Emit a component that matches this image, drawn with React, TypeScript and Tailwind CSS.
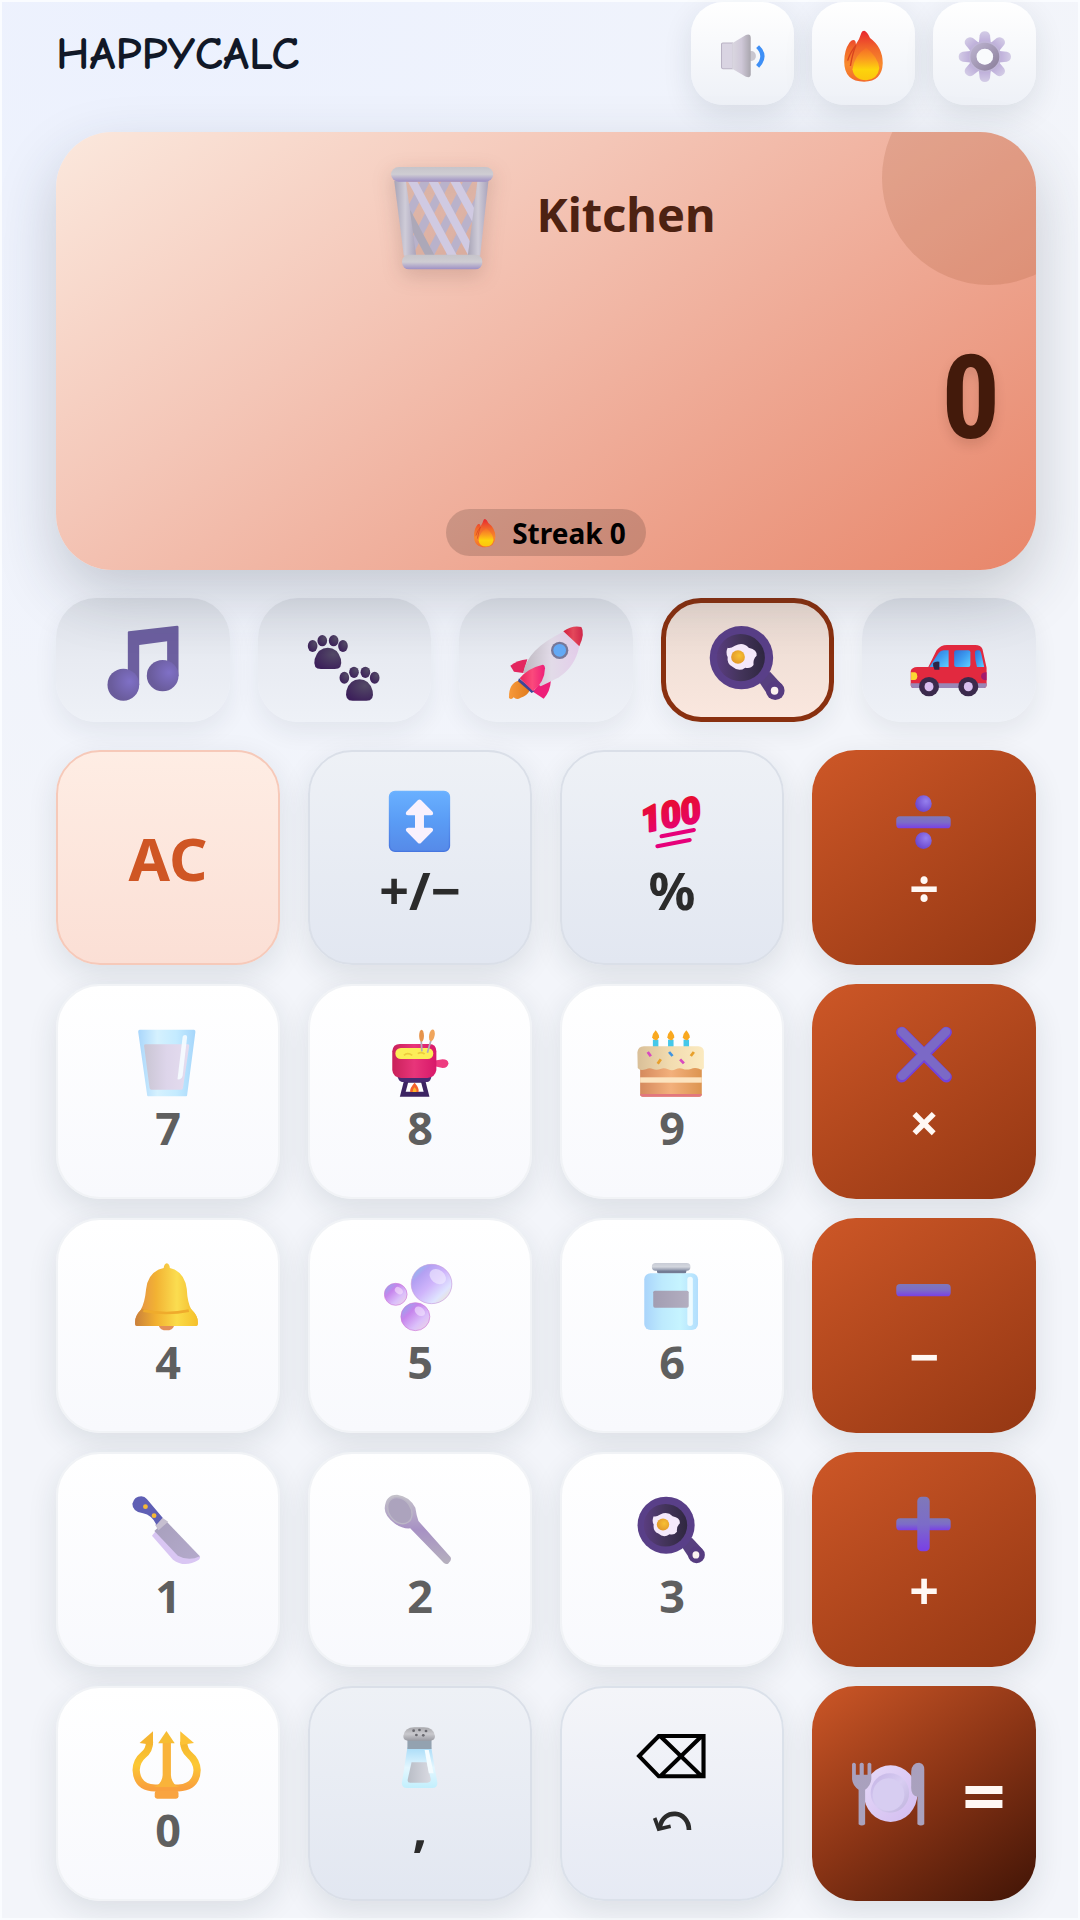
import type { ReactNode } from "react";

function Art({ box, size, children }: { box: string; size: string; children: ReactNode }) {
  return (
    <svg viewBox={box} preserveAspectRatio="none" className={`${size} shrink-0`} aria-hidden="true">
      {children}
    </svg>
  );
}

function Gradient({ id, dir = "v", stops }: { id: string; dir?: "v" | "h" | "d"; stops: string[] }) {
  return (
    <linearGradient id={id} x1="0" y1="0" x2={dir === "v" ? "0" : "1"} y2={dir === "h" ? "0" : "1"}>
      {stops.map((c, i) => (
        <stop key={i} offset={i / (stops.length - 1)} stopColor={c} />
      ))}
    </linearGradient>
  );
}

/* Shared paints for all icons */
function Paints() {
  return (
    <svg width="0" height="0" className="absolute" aria-hidden="true">
      <defs>
        <Gradient id="steel" stops={["#c6c4ca", "#cfcdd3", "#9d8fc4"]} />
        <Gradient id="steelH" dir="h" stops={["#a8a4b6", "#cfccd8", "#a9a3bb"]} />
        <Gradient id="cone" dir="h" stops={["#dad7e0", "#cfc8d8", "#a9a6ae"]} />
        <Gradient id="fireOut" stops={["#e8262f", "#f0652a", "#f98a2c", "#f26a2c"]} />
        <Gradient id="fireIn" stops={["#f56a26", "#fb9a20", "#fdd40c", "#fcc50e"]} />
        <Gradient id="gear" stops={["#d3cce6", "#b7a5d6"]} />
        <Gradient id="gearRing" dir="d" stops={["#b9b0cc", "#8f839f"]} />
        <radialGradient id="note" cx="0.7" cy="0.4" r="0.6">
          <stop offset="0" stopColor="#7f70c6" />
          <stop offset="1" stopColor="#6a5c9c" />
        </radialGradient>
        <radialGradient id="paw" cx="0.7" cy="0.3" r="0.8">
          <stop offset="0" stopColor="#534a66" />
          <stop offset="1" stopColor="#3c1f5a" />
        </radialGradient>
        <Gradient id="hull" dir="h" stops={["#bdb8c0", "#e2dbe8", "#e3cdea"]} />
        <Gradient id="nose" dir="h" stops={["#d81d3f", "#e84a5c", "#d3264a"]} />
        <Gradient id="fin" dir="h" stops={["#e8255c", "#fb4a7c", "#ee1f78"]} />
        <Gradient id="flame" dir="h" stops={["#f7993a", "#e07b1c"]} />
        <Gradient id="panIn" dir="h" stops={["#5a3d80", "#43345a", "#2f2740"]} />
        <radialGradient id="yolk" cx="0.6" cy="0.4" r="0.6">
          <stop offset="0" stopColor="#f7c033" />
          <stop offset="1" stopColor="#e39a2a" />
        </radialGradient>
        <Gradient id="glass" dir="d" stops={["#2f6fd8", "#3d9cf0", "#5fd0ff"]} />
        <Gradient id="blueKey" stops={["#69b0ff", "#5a9cf5", "#568ae8"]} />
        <Gradient id="blueEdge" stops={["#6db3ff", "#4676e0"]} />
        <Gradient id="hundred" stops={["#e80f22", "#e6007e"]} />
        <Gradient id="violet" stops={["#7f78b8", "#7c6cc8", "#7a3fe6"]} />
        <radialGradient id="violetDot" cx="0.65" cy="0.35" r="0.7">
          <stop offset="0" stopColor="#9580ee" />
          <stop offset="1" stopColor="#6a45cc" />
        </radialGradient>
        <Gradient id="cup" dir="h" stops={["#a9d6fb", "#d5f1fe", "#c4ebff", "#a6d6fb"]} />
        <Gradient id="milk" dir="h" stops={["#c9c5d3", "#ddd5ea", "#e5dcef"]} />
        <Gradient id="pot" dir="h" stops={["#c9215a", "#e8357a", "#d8186a"]} />
        <Gradient id="frost" dir="h" stops={["#d9bf98", "#f2dcb0", "#fbeac0"]} />
        <Gradient id="sponge" dir="h" stops={["#d58a5e", "#f3b07c", "#dc9450"]} />
        <Gradient id="bell" dir="h" stops={["#e28c4a", "#f2b233", "#fbdd50", "#f2b82a"]} />
        <Gradient id="bellRim" dir="h" stops={["#c9803c", "#f2b030", "#fbdc48", "#f5c02c"]} />
        <Gradient id="bubble" dir="d" stops={["#72d2ec", "#b3a0f2", "#cfb4fb", "#dfe4ff", "#f3e0b4"]} />
        <Gradient id="bubbleP" dir="d" stops={["#7cb8ea", "#c684ec", "#dbc0fa", "#f0d8e0"]} />
        <Gradient id="lid" stops={["#c8ccd6", "#d3d6de", "#8890a6"]} />
        <Gradient id="jar" dir="h" stops={["#a9d4fb", "#bdeafd", "#c6f4ff", "#b3defd"]} />
        <Gradient id="label" dir="h" stops={["#a29db2", "#b3aec0"]} />
        <Gradient id="knife" dir="d" stops={["#a79fbc", "#b4aacb"]} />
        <Gradient id="spoon" stops={["#c5c3ca", "#a791c4", "#b5b0bd"]} />
        <Gradient id="gold" stops={["#f4b52e", "#fcc834", "#f9a03e"]} />
        <Gradient id="shakerCap" stops={["#a8a8ac", "#c9c9ce", "#9a9ba2"]} />
        <Gradient id="shaker" stops={["#a9dcf8", "#e4f7ff", "#c2effd"]} />
        <Gradient id="salt" dir="h" stops={["#b9bdc6", "#d9dae2"]} />
        <Gradient id="plate" dir="d" stops={["#e6daf8", "#d2bcf0"]} />
        <Gradient id="plateIn" dir="d" stops={["#c3b2e4", "#d8cdf2", "#bfb3dc"]} />
        <Gradient id="cutlery" stops={["#a9a0be", "#aaa2bd"]} />
      </defs>
    </svg>
  );
}

const KEY = "size-[72px]";
const TAB = "size-20";
const TOP = "size-[54px]";

const Speaker = () => (
  <Art box="510 87 157 162" size={TOP}>
    <ellipse cx="613" cy="168" rx="13" ry="15" fill="#c8c6cf" />
    <path d="M526 133q0-4 4-4h28v77h-28q-4 0-4-4z" fill="#d9d4e2" stroke="#b9b2c4" strokeWidth="3" />
    <path d="M557 130l40-25q14-5 14 9v109q0 12-14 7l-40-24z" fill="url(#cone)" />
    <path d="M631 140Q659 168 631 199" fill="none" stroke="#3e8ff6" strokeWidth="12" />
  </Art>
);

const Fire = ({ size }: { size: string }) => (
  <Art box="859 87 157 162" size={size}>
    <path
      d="M938 92Q947 94 955 114Q992 142 992 190Q990 245 938 245Q880 244 880 185Q880 150 895 128Q902 117 910 121Q914 124 914 133Q925 116 930 98Q932 92 938 92Z"
      fill="url(#fireOut)"
    />
    <path d="M890 182Q898 155 914 136Q904 160 898 198" fill="none" stroke="#d9441f" strokeWidth="4" />
    <path d="M944 143Q978 170 982 204Q978 238 944 241Q908 240 904 208Q910 165 944 143Z" fill="url(#fireIn)" />
  </Art>
);

const Gear = () => (
  <Art box="1211 87 157 162" size={TOP}>
    {[0, 45, 90, 135, 180, 225, 270, 315].map((a) => (
      <path key={a} d="M1271 136L1274 106Q1277 94 1289 94Q1301 94 1304 106L1307 136Z" fill="url(#gear)" transform={`rotate(${a} 1289 170)`} />
    ))}
    <circle cx="1289" cy="170" r="47" fill="#c0b5d8" />
    <circle cx="1289" cy="170" r="33" fill="none" stroke="url(#gearRing)" strokeWidth="18" />
    <circle cx="1289" cy="170" r="24" fill="#f9fbfd" />
  </Art>
);

const Basket = () => (
  <Art box="1130 495 314 324" size="size-[108px]">
    <clipPath id="basketClip">
      <path d="M1178 548H1394L1368 770H1206Z" />
    </clipPath>
    <g clipPath="url(#basketClip)" fill="none" strokeWidth="24">
      <g stroke="#b9b2cb">
        <path d="M1245 535L1180 665" />
        <path d="M1305 535L1185 775" />
        <path d="M1368 535L1245 780" />
        <path d="M1400 590L1305 780" />
      </g>
      <g stroke="#d0cae2">
        <path d="M1195 535L1325 785" />
        <path d="M1255 535L1385 785" />
        <path d="M1318 535L1400 690" />
        <path d="M1185 640L1260 785" stroke="#aca8b8" />
      </g>
    </g>
    <path d="M1148 545H1182L1212 770H1176Z" fill="url(#steelH)" />
    <path d="M1390 545H1422L1398 770H1362Z" fill="url(#steelH)" />
    <rect x="1139" y="504" width="297" height="44" rx="22" fill="url(#steel)" />
    <rect x="1171" y="767" width="233" height="44" rx="20" fill="url(#steel)" />
  </Art>
);

const Music = () => (
  <Art box="296 102 232 240" size={TAB}>
    <path d="M368 130q0-3 3-3L511 110q4 0 4 4V262H482V157L401 168V288H368Z" fill="#6c5f9f" />
    <ellipse cx="355" cy="287" rx="46" ry="48" fill="url(#note)" />
    <ellipse cx="469" cy="260" rx="46" ry="47" fill="url(#note)" />
  </Art>
);

const Paws = () => (
  <Art box="881 102 232 240" size={TAB}>
    {["translate(0 0)", "translate(92 95)"].map((t) => (
      <g key={t} transform={t} fill="url(#paw)">
        <path d="M950 176Q978 176 988 210Q994 240 970 240H930Q906 240 912 210Q922 176 950 176Z" />
        <ellipse cx="906" cy="171" rx="14" ry="18" />
        <ellipse cx="934" cy="155" rx="14" ry="17" />
        <ellipse cx="967" cy="155" rx="14" ry="17" />
        <ellipse cx="994" cy="171" rx="14" ry="18" />
      </g>
    ))}
  </Art>
);

const Rocket = () => (
  <Art box="496 432 240 240" size={TAB}>
    <path d="M538 603Q503 612 505 657Q512 664 519 655Q528 665 540 656Q560 650 568 632Z" fill="url(#flame)" />
    <path d="M560 541Q530 544 509 560L520 578L548 582Z" fill="#e3265f" />
    <path d="M631 604Q628 640 609 659L577 638L600 610Z" fill="#ee1f78" />
    <path d="M668 458L716 502Q704 562 655 595Q630 608 600 622L548 580Q560 510 668 458Z" fill="url(#hull)" />
    <path d="M668 457Q694 438 722 444Q734 462 716 502Z" fill="url(#nose)" />
    <path d="M535 598L582 636L573 642L532 607Z" fill="#3c4796" />
    <path d="M606 557Q560 568 537 598L577 637Q612 610 613 568Q612 557 606 557Z" fill="url(#fin)" />
    <circle cx="657" cy="514" r="26" fill="#77799a" />
    <circle cx="657" cy="514" r="19" fill="#64aaf6" />
  </Art>
);

const Pan = ({ size }: { size: string }) => (
  <Art box="488 102 232 240" size={size}>
    <path d="M632 272L668 248L700 284L664 322Z" fill="#57407f" />
    <ellipse cx="683" cy="305" rx="27" ry="28" fill="#563c80" />
    <ellipse cx="681" cy="305" rx="11" ry="12" fill="#fbf3f0" />
    <ellipse cx="585" cy="206" rx="92" ry="95" fill="#593f88" />
    <ellipse cx="583" cy="206" rx="70" ry="71" fill="url(#panIn)" />
    <path d="M545 176Q552 180 566 170Q590 158 606 176Q632 182 629 200Q618 210 620 228Q612 240 596 236Q578 250 560 234Q542 226 545 204Q538 190 545 176Z" fill="#f5e9fb" />
    <ellipse cx="575" cy="204" rx="20" ry="20" fill="url(#yolk)" />
  </Art>
);

const Car = () => (
  <Art box="1072 102 232 240" size={TAB}>
    <path d="M1152 184Q1164 168 1182 168H1264Q1280 168 1285 180L1297 236V288Q1297 297 1288 297H1086Q1077 297 1077 288V246Q1080 235 1096 234H1128Z" fill="#e2293f" />
    <path d="M1077 283H1297V288Q1297 297 1288 297H1086Q1077 297 1077 288Z" fill="#9a86b6" />
    <path d="M1131 234L1158 192Q1164 184 1172 184H1187V234Z" fill="url(#glass)" />
    <rect x="1203" y="184" width="47" height="50" rx="6" fill="url(#glass)" />
    <path d="M1268 184H1276Q1280 186 1282 196L1290 234H1269Q1263 210 1263 192Q1263 185 1268 184Z" fill="url(#glass)" />
    <path d="M1142 222Q1148 216 1160 218V242H1146Q1140 232 1142 222Z" fill="#2d2445" />
    <path d="M1078 250H1090Q1096 252 1096 262Q1096 273 1088 273H1078Z" fill="#fbd934" />
    <path d="M1297 250Q1281 250 1281 262Q1281 274 1297 274Z" fill="#a31a6e" />
    {[1130, 1244].map((x) => (
      <g key={x}>
        <circle cx={x} cy="293" r="29" fill="#3b2a4c" />
        <ellipse cx={x} cy="293" rx="13" ry="14" fill="#d9bff0" />
      </g>
    ))}
  </Art>
);

const UpDown = () => (
  <Art box="1114 591 209 216" size={KEY}>
    <rect x="1130" y="607" width="174" height="180" rx="16" fill="url(#blueKey)" stroke="url(#blueEdge)" strokeWidth="4" />
    <path
      d="M1212 634q5-5 10 0l33 34q5 9-5 11h-20v37h20q10 2 5 11l-33 34q-5 5-10 0l-33-34q-5-9 5-11h20v-37h-20q-10-2-5-11z"
      fill="#f9f1fd"
    />
  </Art>
);

const Hundred = () => (
  <svg viewBox="0 0 72 72" className="size-[72px] shrink-0 overflow-visible" aria-hidden="true">
    <g transform="rotate(-11 36 36)">
      <text
        x="36"
        y="41"
        textAnchor="middle"
        fontFamily="Roboto, sans-serif"
        fontSize="36"
        fontWeight="900"
        fontStyle="italic"
        fill="url(#hundred)"
        stroke="url(#hundred)"
        strokeWidth="2"
        strokeLinejoin="round"
      >
        100
      </text>
      <path d="M23 48H56M17 57H50" stroke="#e6007a" strokeWidth="4" strokeLinecap="round" />
    </g>
  </svg>
);

const Divide = () => (
  <Art box="1011 591 209 216" size={KEY}>
    <rect x="1035" y="682" width="158" height="36" rx="11" fill="url(#violet)" />
    <ellipse cx="1114" cy="644" rx="24" ry="25" fill="url(#violetDot)" />
    <ellipse cx="1114" cy="755" rx="24" ry="25" fill="url(#violetDot)" />
  </Art>
);

const Times = () => (
  <Art box="1011 123 209 216" size={KEY}>
    <g strokeLinecap="round">
      <path d="M1051 160L1180 294M1180 160L1051 294" stroke="#7243dc" strokeWidth="33" />
      <path d="M1052 158L1180 290M1179 158L1052 290" stroke="#7b69c6" strokeWidth="26" />
    </g>
  </Art>
);

const Minus = () => (
  <Art box="1011 825 209 216" size={KEY}>
    <rect x="1035" y="915" width="158" height="37" rx="11" fill="url(#violet)" />
  </Art>
);

const Plus = () => (
  <Art box="1011 145 209 216" size={KEY}>
    <rect x="1035" y="236" width="158" height="36" rx="11" fill="url(#violet)" />
    <rect x="1096" y="171" width="36" height="164" rx="13" fill="url(#violet)" />
  </Art>
);

const Glass = () => (
  <Art box="383 136 209 216" size={KEY}>
    <path d="M405 147H563Q568 148 567 154L543 344Q543 347 540 347H430Q427 347 427 344L401 154Q400 148 405 147Z" fill="url(#cup)" />
    <path d="M418 195Q418 191 423 191H546Q550 191 549 196L531 322Q530 327 526 327H439Q435 327 434 322Z" fill="url(#milk)" />
    <path d="M530 168Q531 163 537 163Q543 163 543 169L530 285Q526 298 515 296Z" fill="#f6fcff" opacity="0.9" />
  </Art>
);

const Fondue = () => (
  <Art box="1114 136 209 216" size={KEY}>
    <path d="M1258 240L1284 236Q1300 236 1301 248Q1300 262 1284 262L1258 256Z" fill="#ee3b80" />
    <path d="M1172 300H1234L1246 348H1160Z" fill="#3c2463" />
    <path d="M1184 306H1222L1229 333H1177Z" fill="#fff" />
    <path d="M1203 306Q1218 324 1214 334H1190Q1188 322 1203 306Z" fill="#f2622e" />
    <path d="M1203 320Q1210 328 1208 334H1197Q1196 326 1203 320Z" fill="#fbb62c" />
    <path d="M1153 286H1252Q1250 303 1240 304H1166Q1156 302 1153 286Z" fill="#472a72" />
    <path d="M1138 212Q1140 190 1160 190H1246Q1265 190 1266 212V268Q1262 291 1240 292H1164Q1140 290 1138 268Z" fill="url(#pot)" />
    <rect x="1147" y="202" width="110" height="33" rx="16" fill="#fcee58" />
    <path d="M1172 224Q1182 214 1196 224M1212 219Q1222 212 1232 220" stroke="#eccb3c" strokeWidth="5" fill="none" />
    <path d="M1222 180L1224 212M1250 180L1240 216" stroke="#b3aab8" strokeWidth="5" />
    <ellipse cx="1223" cy="165" rx="7" ry="18" fill="#e6934a" />
    <ellipse cx="1253" cy="164" rx="8" ry="18" fill="#f0a55c" transform="rotate(10 1253 164)" />
  </Art>
);

const Cake = () => (
  <Art box="279 136 209 216" size={KEY}>
    {[336, 380, 425].map((x) => (
      <g key={x}>
        <rect x={x - 8} y="177" width="16" height="24" fill="#45c8ea" />
        <path d={`M${x} 149Q${x + 11} 162 ${x + 10} 170Q${x + 6} 179 ${x} 179Q${x - 8} 178 ${x - 10} 170Q${x - 10} 160 ${x} 149Z`} fill="#f9a81f" />
      </g>
    ))}
    <path d="M291 255H470V340Q470 348 462 348H299Q291 348 291 340Z" fill="url(#sponge)" />
    <path d="M291 340H470Q470 348 462 348H299Q291 348 291 340Z" fill="#e2777e" />
    <rect x="291" y="290" width="179" height="16" fill="#fce4c0" />
    <path
      d="M283 215Q285 197 302 197H460Q475 198 476 212V262Q472 270 462 264Q448 260 438 265Q425 269 414 264Q404 260 394 266Q384 272 372 266Q360 260 350 265Q338 270 328 265Q318 260 308 266Q290 272 284 262Z"
      fill="url(#frost)"
    />
    <g strokeWidth="8">
      <path d="M313 214L322 227M407 236L418 248" stroke="#d84ac0" />
      <path d="M375 214L385 226" stroke="#3f94e0" />
      <path d="M447 214L438 226M351 236L342 249" stroke="#e8a02c" />
    </g>
  </Art>
);

const Bell = () => (
  <Art box="383 838 209 216" size={KEY}>
    <ellipse cx="483" cy="1037" rx="21" ry="12" fill="#e38f58" />
    <path
      d="M484 848Q492 850 493 862Q535 872 542 925Q544 968 556 988Q574 1004 574 1024V1030Q574 1036 568 1036H398Q392 1036 392 1030V1024Q392 1004 408 988Q420 968 424 925Q430 872 475 862Q476 850 484 848Z"
      fill="url(#bell)"
    />
    <path d="M412 984Q484 1004 554 984Q574 1004 574 1024V1030Q574 1036 568 1036H398Q392 1036 392 1030V1024Q392 1004 412 984Z" fill="url(#bellRim)" />
    <path d="M416 990Q484 1004 548 990" fill="none" stroke="#efab2c" strokeWidth="8" />
  </Art>
);

const Bubbles = () => (
  <Art box="1114 838 209 216" size={KEY}>
    <circle cx="1252" cy="910" r="59" fill="url(#bubble)" stroke="#c79be0" strokeWidth="2" />
    <ellipse cx="1270" cy="888" rx="26" ry="20" fill="#f2eeff" opacity="0.6" transform="rotate(40 1270 888)" />
    <circle cx="1148" cy="941" r="33" fill="url(#bubbleP)" stroke="#d07ad8" strokeWidth="2" />
    <ellipse cx="1157" cy="930" rx="13" ry="9" fill="#f6e4fb" opacity="0.6" transform="rotate(40 1157 930)" />
    <circle cx="1205" cy="1008" r="42" fill="url(#bubbleP)" stroke="#d07ad8" strokeWidth="2" />
    <ellipse cx="1218" cy="992" rx="17" ry="12" fill="#f3e8ff" opacity="0.6" transform="rotate(40 1218 992)" />
  </Art>
);

const Jar = () => (
  <Art box="279 838 209 216" size={KEY}>
    <rect x="340" y="862" width="85" height="17" rx="6" fill="#747c94" />
    <rect x="325" y="847" width="112" height="23" rx="11" fill="url(#lid)" />
    <rect x="303" y="878" width="156" height="170" rx="18" fill="url(#jar)" />
    <rect x="428" y="888" width="16" height="148" rx="8" fill="#eefbff" />
    <rect x="329" y="930" width="103" height="51" rx="5" fill="url(#label)" />
  </Art>
);

const Knife = () => (
  <Art box="383 159 209 216" size={KEY}>
    <path d="M441 284L452 270L580 346Q582 352 576 357Q536 382 502 356Z" fill="#d9c6f3" />
    <path d="M480 238L580 346Q548 362 516 344L448 270Z" fill="url(#knife)" />
    <path d="M468 228L488 242L460 268L450 252Z" fill="#c6bfd0" />
    <path d="M426 174L472 230L454 251Q440 222 415 217Q384 212 384 188Q390 166 410 166Q420 167 426 174Z" fill="#5f5fb4" />
    <circle cx="422" cy="197" r="7" fill="#f5b936" />
    <circle cx="447" cy="224" r="7" fill="#f5b936" />
  </Art>
);

const Spoon = () => (
  <Art box="1114 159 209 216" size={KEY}>
    <path
      d="M1116 202Q1118 161 1152 161Q1188 166 1205 200Q1208 222 1214 240L1307 348Q1312 358 1300 368Q1294 371 1288 366L1190 262Q1168 264 1146 248Q1116 226 1116 202Z"
      fill="url(#spoon)"
    />
    <ellipse cx="1160" cy="209" rx="32" ry="42" transform="rotate(-34 1160 209)" fill="#aca3bd" stroke="#bbb6c6" strokeWidth="4" />
  </Art>
);

const Trident = () => (
  <Art box="383 859 209 216" size={KEY}>
    <path
      d="M434 900Q434 925 416 940Q396 957 395 985Q398 1038 450 1039H518Q570 1036 572 985Q570 957 550 940Q533 924 533 900"
      fill="none"
      stroke="url(#gold)"
      strokeWidth="21"
    />
    <path d="M472 895H496V1000Q498 1028 520 1036H446Q470 1028 472 1000Z" fill="#f9b33a" />
    <path d="M483 868L507 905H459Z" fill="#f7bd33" />
    <path d="M444 869L444 910L405 904Z" fill="#f5b531" />
    <path d="M523 869L563 904L523 910Z" fill="#fcc236" />
    <rect x="449" y="1047" width="69" height="24" rx="7" fill="#f9a440" />
  </Art>
);

const Shaker = () => (
  <Art box="1114 846 209 216" size={KEY}>
    <path d="M1182 922H1251L1269 1028Q1269 1044 1254 1044H1180Q1165 1044 1166 1028Z" fill="url(#shaker)" />
    <path d="M1194 967H1238L1250 1018Q1250 1028 1240 1028H1190Q1181 1028 1183 1018Z" fill="url(#salt)" />
    <path d="M1232 930H1244L1258 1000H1244Z" fill="#f4fcff" />
    <rect x="1182" y="896" width="70" height="31" fill="#93a2b0" />
    <path d="M1170 888Q1174 862 1202 862H1230Q1258 862 1262 888Q1262 902 1248 902H1184Q1170 902 1170 888Z" fill="url(#shakerCap)" />
    {[[1200, 872], [1217, 870], [1236, 873], [1208, 885], [1228, 886]].map(([x, y]) => (
      <circle key={x} cx={x} cy={y} r="4" fill="#68686e" />
    ))}
  </Art>
);

const Backspace = () => (
  <Art box="279 846 209 216" size={KEY}>
    <path d="M288 948L345 888H475V1009H345ZM349 888L470 1009M470 888L349 1009" fill="none" stroke="#000" strokeWidth="12" />
  </Art>
);

const Undo = () => (
  <svg viewBox="96 304 120 66" className="h-[22px] w-10" fill="none" stroke="#2b2b2b" aria-hidden="true">
    <path d="M207 361C206 300 128 296 120 352" strokeWidth="14" />
    <path d="M104 325L116 358L152 350" strokeWidth="11" />
  </svg>
);

const Plate = () => (
  <Art box="900 960 221 228" size="size-[76px]">
    <ellipse cx="1018" cy="1073" rx="78" ry="85" fill="url(#plate)" />
    <ellipse cx="1016" cy="1071" rx="56" ry="59" fill="url(#plateIn)" />
    <ellipse cx="1012" cy="1076" rx="46" ry="49" fill="#d7cdf1" />
    <path
      d="M906 984Q911 976 917 984V1016H928V984Q934 976 940 984V1016H951V984Q956 976 962 984V1030Q960 1050 944 1061V1165Q934 1172 925 1165V1061Q908 1050 906 1030Z"
      fill="url(#cutlery)"
    />
    <path d="M1078 1006Q1080 980 1101 980Q1116 982 1116 1000V1165Q1106 1172 1096 1165V1082Q1076 1078 1078 1050Z" fill="url(#cutlery)" />
  </Art>
);

const shade = "shadow-[0_10px_30px_rgba(30,41,59,0.11)]";
const keyBase = "flex h-[215px] flex-col items-center justify-center rounded-[44px] border-2";
const digitKey = "border-[#f1f3f6] bg-linear-to-b from-white to-[#f8f9fd] text-[45px] leading-[60px] text-[#5f5f5f]";
const fnKey = "border-[#dadfe8] bg-linear-to-b from-[#eef1f6] to-[#e2e7f1] pb-2 text-[52px] leading-[64px] text-[#2b2b2b]";
const backKey = "border-[#dbe1ea] bg-linear-to-b from-[#f4f5f9] to-[#e6eaf4] pb-4";
const opKey = "border-transparent bg-linear-[145deg,#cd5727,#943713] bg-origin-border pb-3 text-[52px] leading-[60px] text-[#fff8f4]";

type KeyDef = { label: ReactNode; name: string; icon: ReactNode; kind: string };

const keys: KeyDef[] = [
  { label: "+/−", name: "Plus or minus", icon: <UpDown />, kind: fnKey },
  { label: "%", name: "Percent", icon: <Hundred />, kind: fnKey },
  { label: "÷", name: "Divide", icon: <Divide />, kind: opKey },
  { label: "7", name: "7", icon: <Glass />, kind: digitKey },
  { label: "8", name: "8", icon: <Fondue />, kind: digitKey },
  { label: "9", name: "9", icon: <Cake />, kind: digitKey },
  { label: "×", name: "Multiply", icon: <Times />, kind: opKey },
  { label: "4", name: "4", icon: <Bell />, kind: digitKey },
  { label: "5", name: "5", icon: <Bubbles />, kind: digitKey },
  { label: "6", name: "6", icon: <Jar />, kind: digitKey },
  { label: "−", name: "Subtract", icon: <Minus />, kind: opKey },
  { label: "1", name: "1", icon: <Knife />, kind: digitKey },
  { label: "2", name: "2", icon: <Spoon />, kind: digitKey },
  { label: "3", name: "3", icon: <Pan size={KEY} />, kind: digitKey },
  { label: "+", name: "Add", icon: <Plus />, kind: opKey },
  { label: "0", name: "0", icon: <Trident />, kind: digitKey },
  { label: ",", name: "Decimal comma", icon: <Shaker />, kind: fnKey },
  {
    label: (
      <span className="flex h-14 items-center">
        <Undo />
      </span>
    ),
    name: "Backspace",
    icon: <Backspace />,
    kind: backKey,
  },
];

const tabs = [
  { name: "Music", icon: <Music /> },
  { name: "Animals", icon: <Paws /> },
  { name: "Space", icon: <Rocket /> },
  { name: "Kitchen", icon: <Pan size={TAB} /> },
  { name: "Vehicles", icon: <Car /> },
];

const tools = [
  { name: "Sound", icon: <Speaker /> },
  { name: "Streak", icon: <Fire size={TOP} /> },
  { name: "Settings", icon: <Gear /> },
];

export default function App() {
  return (
    <div className="min-h-screen border-2 border-[#fafcff] bg-[#f3f5fa] bg-[radial-gradient(circle_at_15%_0%,#ecf1fe_0%,#f3f5fa_45%)] pr-[42px] pb-4 pl-[54px] font-['Noto_Sans','Open_Sans',sans-serif] font-bold">
      <Paints />
      <header className="flex items-start justify-between">
        <h1 className="pt-5 font-['Comic_Sans_MS','Comic_Neue','Lato',sans-serif] text-[47px] leading-[64px] font-bold text-[#111827]">HAPPYCALC</h1>
        <div className="flex gap-[18px]">
          {tools.map((t) => (
            <button
              key={t.name}
              aria-label={t.name}
              className={`flex size-[103px] items-center justify-center rounded-[32px] bg-linear-to-b from-white to-[#eef1f7] pt-1 ${shade}`}
            >
              {t.icon}
            </button>
          ))}
        </div>
      </header>

      <main>
        <section className="relative mt-[27px] flex h-[438px] flex-col overflow-hidden rounded-[56px] bg-linear-[145deg,#fbe8dd_0%,#f4c6b7_35%,#efab97_62%,#e8866a_100%] px-9 pt-8 pb-[14px] shadow-[0_24px_60px_rgba(40,50,62,0.22)]">
          <div className="absolute -top-[61px] -right-[60px] size-[214px] rounded-full bg-[#8a3a10]/14" />
          <div className="flex items-center justify-center gap-10 pl-3">
            <span className="drop-shadow-[0_6px_10px_rgba(60,30,20,0.18)]">
              <Basket />
            </span>
            <h2 className="pb-2 text-[47px] leading-[60px] text-[#4d2212]">Kitchen</h2>
          </div>
          <output className="mt-[68px] block text-right font-['Liberation_Sans_Narrow','Roboto_Condensed','Open_Sans_Condensed','Noto_Sans',sans-serif] text-[116px] leading-[116px] text-[#431a0b] [text-shadow:0_6px_12px_rgba(67,26,11,0.15)]">
            0
          </output>
          <div className="mt-auto flex h-[47px] items-center gap-2 self-center rounded-full bg-black/15 px-5 text-[28px] leading-[40px] text-black">
            <span className="px-1">
              <Fire size="size-[30px]" />
            </span>
            <span>Streak 0</span>
          </div>
        </section>

        <nav className="mt-7 grid grid-cols-5 gap-7">
          {tabs.map((t) => (
            <button
              key={t.name}
              aria-label={t.name}
              aria-pressed={t.name === "Kitchen"}
              className={`flex h-[124px] items-center justify-center rounded-[40px] border-[5px] pt-[6px] ${
                t.name === "Kitchen"
                  ? "border-[#89300f] bg-linear-to-b from-[#e9dad2] to-[#fae7de]"
                  : "border-transparent bg-linear-to-b from-[#dde1e9] via-[#e8ebf2] to-[#eef1f7] bg-origin-border"
              } shadow-[0_10px_24px_rgba(30,41,59,0.07)]`}
            >
              {t.icon}
            </button>
          ))}
        </nav>

        <div className="mt-7 grid grid-cols-4 gap-x-7 gap-y-[19px]">
          <button className={`${keyBase} ${shade} border-[#f6c9b9] bg-linear-to-b from-[#feede4] to-[#fbdfd5] text-[60px] leading-[82px] text-[#cf5624]`}>
            AC
          </button>
          {keys.map((k) => (
            <button key={k.name} aria-label={k.name} className={`${keyBase} ${shade} ${k.kind}`}>
              {k.icon}
              <span>{k.label}</span>
            </button>
          ))}
          <button
            aria-label="Equals"
            className={`flex h-[215px] items-center justify-center gap-9 rounded-[44px] bg-linear-[145deg,#cd5727_0%,#8a3415_50%,#401406_100%] pl-2 text-[76px] leading-[76px] text-[#fff8f4] ${shade}`}
          >
            <Plate />
            <span>=</span>
          </button>
        </div>
      </main>
    </div>
  );
}
